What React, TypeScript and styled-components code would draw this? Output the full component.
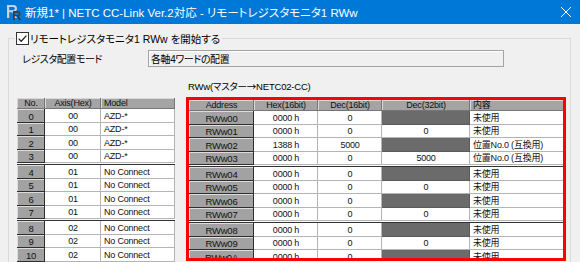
import {FC} from "react"
import styled, {createGlobalStyle} from "styled-components"

const GlobalStyle = createGlobalStyle`
    html, body {
        margin: 0;
        padding: 0;
        background: #f0f0f0;
    }
    body {
        width: 580px;
        height: 262px;
        overflow: hidden;
        font-family: "Liberation Sans", "Noto Sans CJK JP", sans-serif;
        font-feature-settings: "palt";
    }
`

const Window = styled.div`
    width: 580px;
    height: 262px;
    display: flex;
    flex-direction: column;
    background: #f0f0f0;
    overflow: hidden;
`

const TitleBar = styled.div`
    height: 24px;
    flex-shrink: 0;
    background: #0078d7;
    display: flex;
    align-items: center;
    padding: 0 8px 0 6px;
    color: #fff;
`

const TitleText = styled.span`
    flex: 1;
    margin-left: 3px;
    font-size: 11.5px;
    white-space: nowrap;
`

const CloseBtn = styled.div`
    width: 12px;
    height: 12px;
    display: flex;
`

const Body = styled.div`
    padding: 7px 9px 0 8px;
`

const Group = styled.fieldset`
    margin: 0;
    padding: 0;
    border: 1px solid #dadada;
    min-width: 0;
`

const Legend = styled.legend`
    margin-left: 6px;
    padding: 0 2px 0 1px;
    height: 14px;
    display: flex;
    align-items: center;
    gap: 1px;
    font-size: 10.5px;
    color: #000;
    white-space: nowrap;
`

const ModeRow = styled.div`
    display: flex;
    align-items: center;
    margin-top: 5px;
    padding-left: 13px;
    height: 17px;
`

const ModeLabel = styled.span`
    width: 126px;
    font-size: 10px;
    letter-spacing: -0.4px;
    color: #000;
`

const ModeBox = styled.div`
    width: 356px;
    height: 17px;
    box-sizing: border-box;
    border: 1px solid #a3a3a3;
    box-shadow: inset 1px 1px 0 #fff;
    padding-left: 2px;
    display: flex;
    align-items: center;
    font-size: 10px;
    letter-spacing: -0.4px;
    color: #000;
`

const Tables = styled.div`
    display: flex;
    align-items: flex-start;
    margin-top: 12px;
    padding-left: 8px;
    gap: 11px;
`

const LeftTable = styled.table`
    margin-top: 19px;
    border-collapse: separate;
    border-spacing: 0;
    table-layout: fixed;
    width: 155px;
`

const RightCol = styled.div`
    display: flex;
    flex-direction: column;
`

const Caption = styled.div`
    height: 18px;
    line-height: 14px;
    padding-left: 2px;
    font-size: 9.5px;
    letter-spacing: -0.2px;
    color: #000;
    white-space: nowrap;
`

const Arrow = styled.span`
    font-family: "Noto Sans CJK JP", sans-serif;
`

const RedFrame = styled.div`
    box-sizing: border-box;
    border: 3px solid #ff0000;
    width: 380px;
    height: 164px;
    overflow: hidden;
`

const RightTable = styled.table`
    border-collapse: separate;
    border-spacing: 0;
    table-layout: fixed;
    width: 374px;
`

const Th = styled.th<{$w: number; $left?: boolean}>`
    width: ${p => p.$w}px;
    height: 11px;
    padding: 0 0 0 ${p => (p.$left ? 3 : 0)}px;
    background: #a4a4a4;
    box-shadow: inset -1px -1px 0 #767676, inset 1px 1px 0 #d8d8d8;
    font-size: 9px;
    letter-spacing: -0.2px;
    font-weight: normal;
    line-height: 11px;
    color: #111;
    text-align: ${p => (p.$left ? "left" : "center")};
    white-space: nowrap;
    overflow: hidden;
`

const Tr = styled.tr<{$h: number; $group?: boolean}>`
    & > td {
        height: ${p => p.$h + (p.$group ? 2 : 0)}px;
        ${p => (p.$group
            ? `border-top: 2px solid transparent;
               border-image: linear-gradient(to bottom, #fafafa 0 1px, #333 1px 2px, transparent 2px) 2 0 0 0 / 2px 0 0 0;`
            : "")}
    }
`

const RowHead = styled.td`
    box-sizing: border-box;
    padding: 0;
    background: #a2a2a2;
    box-shadow: inset -1px -1px 0 #2e2e2e, inset 1px 1px 0 #dcdcdc;
    font-size: 9.5px;
    letter-spacing: -0.2px;
    line-height: 11px;
    text-align: center;
    color: #111;
    white-space: nowrap;
    overflow: hidden;
`

const Cell = styled.td<{$left?: boolean; $dark?: boolean}>`
    box-sizing: border-box;
    padding: 0 0 0 ${p => (p.$left ? 3 : 0)}px;
    background: ${p => (p.$dark ? "#6b6b6b" : "#fff")};
    box-shadow: inset -1px -1px 0 ${p => (p.$dark ? "#5a5a5a" : "#b4b4b4")};
    font-size: 9px;
    letter-spacing: -0.2px;
    line-height: 11px;
    text-align: ${p => (p.$left ? "left" : "center")};
    color: #111;
    white-space: nowrap;
    overflow: hidden;
`

const axes = [
    {no: "0", axis: "00", model: "AZD-*"},
    {no: "1", axis: "00", model: "AZD-*"},
    {no: "2", axis: "00", model: "AZD-*"},
    {no: "3", axis: "00", model: "AZD-*"},
    {no: "4", axis: "01", model: "No Connect"},
    {no: "5", axis: "01", model: "No Connect"},
    {no: "6", axis: "01", model: "No Connect"},
    {no: "7", axis: "01", model: "No Connect"},
    {no: "8", axis: "02", model: "No Connect"},
    {no: "9", axis: "02", model: "No Connect"},
    {no: "10", axis: "02", model: "No Connect"},
]

const words = [
    {addr: "RWw00", hex: "0000 h", dec: "0", dec32: null, desc: "未使用"},
    {addr: "RWw01", hex: "0000 h", dec: "0", dec32: "0", desc: "未使用"},
    {addr: "RWw02", hex: "1388 h", dec: "5000", dec32: null, desc: "位置No.0 (互換用)"},
    {addr: "RWw03", hex: "0000 h", dec: "0", dec32: "5000", desc: "位置No.0 (互換用)"},
    {addr: "RWw04", hex: "0000 h", dec: "0", dec32: null, desc: "未使用"},
    {addr: "RWw05", hex: "0000 h", dec: "0", dec32: "0", desc: "未使用"},
    {addr: "RWw06", hex: "0000 h", dec: "0", dec32: null, desc: "未使用"},
    {addr: "RWw07", hex: "0000 h", dec: "0", dec32: "0", desc: "未使用"},
    {addr: "RWw08", hex: "0000 h", dec: "0", dec32: null, desc: "未使用"},
    {addr: "RWw09", hex: "0000 h", dec: "0", dec32: "0", desc: "未使用"},
    {addr: "RWw0A", hex: "0000 h", dec: "0", dec32: null, desc: "未使用"},
]

// rows alternate 14/13px to match the 13.5px pitch of the source grid
const rowH = (i: number) => (i % 2 === 0 ? 14 : 13)

const AppIcon: FC = () => (
    <svg width="16" height="16" viewBox="0 0 16 16">
        <path d="M1 1h6.5a3.5 3.5 0 0 1 0.8 6.9L11 14H8.6L6.2 8.2H3.2V14H1Z" fill="#c9d3de" />
        <path d="M3.2 3v3.2h4a1.6 1.6 0 0 0 0-3.2Z" fill="#0078d7" />
        <path d="M7 7h5a2.6 2.6 0 0 1 0.7 5.1L15 16h-2l-2-3.7H8.7V16H7Z" fill="#3a3a3a" />
        <path d="M8.7 8.5v2.4h3a1.2 1.2 0 0 0 0-2.4Z" fill="#0078d7" />
    </svg>
)

const CheckBox: FC = () => (
    <svg width="13" height="13" viewBox="0 0 13 13">
        <rect x="0.5" y="0.5" width="12" height="12" fill="#fff" stroke="#333" />
        <path d="M2.6 6.6l2.6 2.6 5.2-5.6" fill="none" stroke="#222" strokeWidth="1.3" />
    </svg>
)

const App: FC = () => {
    return (
        <Window>
            <GlobalStyle />
            <TitleBar>
                <AppIcon />
                <TitleText>新規1* | NETC CC-Link Ver.2対応 - リモートレジスタモニタ1 RWw</TitleText>
                <CloseBtn>
                    <svg width="12" height="12" viewBox="0 0 12 12">
                        <path d="M1 1l10 10M11 1L1 11" stroke="#fff" strokeWidth="1" />
                    </svg>
                </CloseBtn>
            </TitleBar>
            <Body>
                <Group>
                    <Legend>
                        <CheckBox />
                        リモートレジスタモニタ1 RWw を開始する
                    </Legend>
                    <ModeRow>
                        <ModeLabel>レジスタ配置モード</ModeLabel>
                        <ModeBox>各軸4ワードの配置</ModeBox>
                    </ModeRow>
                    <Tables>
                        <LeftTable>
                            <thead>
                                <tr>
                                    <Th $w={28}>No.</Th>
                                    <Th $w={56}>Axis(Hex)</Th>
                                    <Th $w={71} $left>Model</Th>
                                </tr>
                            </thead>
                            <tbody>
                                {axes.map((a, i) => (
                                    <Tr key={a.no} $h={rowH(i)} $group={i > 0 && i % 4 === 0}>
                                        <RowHead>{a.no}</RowHead>
                                        <Cell>{a.axis}</Cell>
                                        <Cell $left>{a.model}</Cell>
                                    </Tr>
                                ))}
                            </tbody>
                        </LeftTable>
                        <RightCol>
                            <Caption>RWw(マスター<Arrow>→</Arrow>NETC02-CC)</Caption>
                            <RedFrame>
                                <RightTable>
                                    <thead>
                                        <tr>
                                            <Th $w={65}>Address</Th>
                                            <Th $w={64}>Hex(16bit)</Th>
                                            <Th $w={64}>Dec(16bit)</Th>
                                            <Th $w={88}>Dec(32bit)</Th>
                                            <Th $w={93} $left>内容</Th>
                                        </tr>
                                    </thead>
                                    <tbody>
                                        {words.map((w, i) => (
                                            <Tr key={w.addr} $h={rowH(i)} $group={i > 0 && i % 4 === 0}>
                                                <RowHead>{w.addr}</RowHead>
                                                <Cell>{w.hex}</Cell>
                                                <Cell>{w.dec}</Cell>
                                                <Cell $dark={w.dec32 === null}>{w.dec32}</Cell>
                                                <Cell $left>{w.desc}</Cell>
                                            </Tr>
                                        ))}
                                    </tbody>
                                </RightTable>
                            </RedFrame>
                        </RightCol>
                    </Tables>
                </Group>
            </Body>
        </Window>
    )
}

export default App
